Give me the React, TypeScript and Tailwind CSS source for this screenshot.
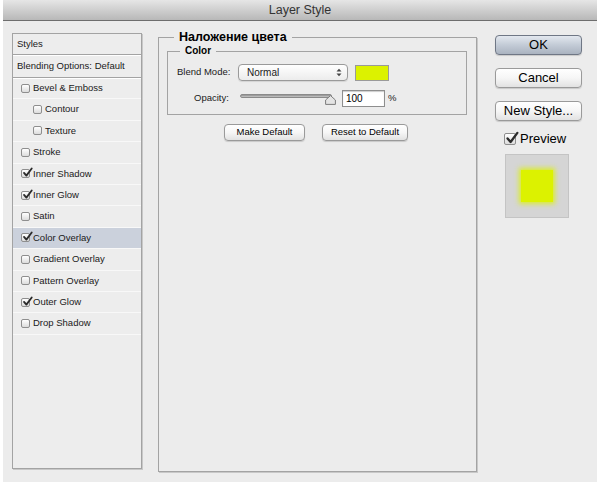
import React from 'react';

const font = { fontFamily: '"Liberation Sans", Arial, sans-serif' };

type Item = { label: string; checked?: boolean; indent?: boolean; active?: boolean };

const items: Item[] = [
  { label: 'Bevel & Emboss' },
  { label: 'Contour', indent: true },
  { label: 'Texture', indent: true },
  { label: 'Stroke' },
  { label: 'Inner Shadow', checked: true },
  { label: 'Inner Glow', checked: true },
  { label: 'Satin' },
  { label: 'Color Overlay', checked: true, active: true },
  { label: 'Gradient Overlay' },
  { label: 'Pattern Overlay' },
  { label: 'Outer Glow', checked: true },
  { label: 'Drop Shadow' },
];

function Check({ checked, size = 9 }: { checked?: boolean; size?: number }) {
  return (
    <span
      className="relative inline-block shrink-0 rounded-[2px] border border-[#8e8e8e] bg-gradient-to-b from-white to-[#dcdcdc]"
      style={{ width: size, height: size }}
    >
      {checked && (
        <svg
          viewBox="0 0 12 12"
          className="absolute"
          style={{ width: size + 2, height: size + 2, left: 0, top: -3 }}
        >
          <path d="M2.2 6.4 L4.8 9.4 L10.6 1.6" fill="none" stroke="#2b2b2b" strokeWidth="2" strokeLinecap="round" strokeLinejoin="round" />
        </svg>
      )}
    </span>
  );
}

function MacButton({ children, primary, className = '' }: { children: React.ReactNode; primary?: boolean; className?: string }) {
  return (
    <div
      className={`flex items-center justify-center rounded-[4px] border text-black shadow-[0_1px_1px_rgba(0,0,0,0.15)] ${
        primary
          ? 'border-[#6f7785] bg-gradient-to-b from-[#e3e8ef] via-[#c3cbd6] to-[#aab3c0]'
          : 'border-[#9a9a9a] bg-gradient-to-b from-white via-[#f6f6f6] to-[#e2e2e2]'
      } ${className}`}
    >
      {children}
    </div>
  );
}

export default function App() {
  return (
    <div className="w-[600px] h-[482px] bg-white overflow-hidden" style={font}>
      <div className="mx-[3px] h-full flex flex-col bg-[#ececec]">
        {/* title bar */}
        <div className="h-[21px] shrink-0 flex items-center justify-center bg-gradient-to-b from-[#e6e6e6] to-[#b8b8b8] border-b border-[#6e6e6e] text-[12.5px] text-[#333]">
          Layer Style
        </div>

        <div className="flex flex-1 pt-[12px]">
          {/* styles list */}
          <div className="ml-[9px] w-[130px] h-[436px] border border-[#a3a3a3] shadow-[1px_1px_0_#c8c8c8] bg-[#ededed] text-[9.5px] text-[#1a1a1a]">
            <div className="h-[21px] flex items-center pl-[4px] border-b border-[#a3a3a3] shadow-[0_1px_0_#fff]">Styles</div>
            <div className="h-[23px] flex items-center pl-[4px] border-b border-[#a3a3a3] shadow-[0_1px_0_#fff]">
              Blending Options: Default
            </div>
            {items.map((it) => (
              <div
                key={it.label}
                className={`h-[21.4px] flex items-center gap-[3px] border-b border-[#f8f8f8] ${
                  it.indent ? 'pl-[20px]' : 'pl-[8px]'
                } ${it.active ? 'bg-[#cbd1dc]' : ''}`}
              >
                <Check checked={it.checked} />
                <span>{it.label}</span>
              </div>
            ))}
          </div>

          {/* main panel */}
          <fieldset className="ml-[16px] -mt-[5px] w-[319px] h-[444px] border border-[#a3a3a3] shadow-[1px_1px_0_#c8c8c8]">
            <legend className="ml-[15px] px-[5px] text-[12.5px] font-bold text-black leading-[18px]">Наложение цвета</legend>
            <fieldset className="ml-[8px] mr-[9px] mt-[-1px] h-[70px] border border-[#a3a3a3]">
              <legend className="ml-[12px] px-[5px] text-[10px] font-bold text-black leading-[12px]">Color</legend>
              <div className="flex items-center mt-[7px] text-[9.5px] text-[#1a1a1a]">
                <span className="ml-[9px] w-[61px]">Blend Mode:</span>
                <div className="w-[110px] h-[17px] rounded-[4px] border border-[#9a9a9a] bg-gradient-to-b from-white to-[#ececec] flex items-center pl-[8px] pr-[5px] justify-between shadow-[0_1px_1px_rgba(0,0,0,0.1)]">
                  <span className="text-[10px]">Normal</span>
                  <svg width="6" height="9" viewBox="0 0 6 9">
                    <path d="M0.5 3.5 L3 0.8 L5.5 3.5 Z M0.5 5.5 L3 8.2 L5.5 5.5 Z" fill="#444" />
                  </svg>
                </div>
                <div className="ml-[7px] w-[34px] h-[16px] bg-[#dcf200] border border-[#9a9a9a]" />
              </div>
              <div className="flex items-center mt-[9px] text-[9.5px] text-[#1a1a1a]">
                <span className="ml-[26px] w-[46px]">Opacity:</span>
                <div className="relative w-[96px] h-[12px]">
                  <div className="absolute left-0 right-[4px] top-[1px] h-[4px] rounded-full bg-gradient-to-b from-[#8f8f8f] to-[#c9c9c9] border border-[#8a8a8a]" />
                  <svg className="absolute right-0 top-[2px]" width="11" height="10" viewBox="0 0 11 10">
                    <path d="M5.5 0.6 L10.4 5 L10.4 9.4 L0.6 9.4 L0.6 5 Z" fill="#e4e4e4" stroke="#7c7c7c" strokeWidth="1" />
                  </svg>
                </div>
                <div className="ml-[6px] w-[43px] h-[17px] bg-white border border-[#8e8e8e] shadow-[inset_0_1px_1px_rgba(0,0,0,0.2)] flex items-center pl-[3px] text-[10px] text-black">
                  100
                </div>
                <span className="ml-[3px]">%</span>
              </div>
            </fieldset>
            <div className="flex mt-[9px] text-[9.5px] text-black">
              <MacButton className="ml-[65px] w-[81px] h-[17px]">Make Default</MacButton>
              <MacButton className="ml-[17px] w-[86px] h-[17px]">Reset to Default</MacButton>
            </div>
          </fieldset>

          {/* right column */}
          <div className="ml-[18px] w-[87px] flex flex-col">
            <MacButton primary className="mt-[2px] h-[20px] text-[13px]">OK</MacButton>
            <MacButton className="mt-[13px] h-[20px] text-[13px]">Cancel</MacButton>
            <MacButton className="mt-[13px] h-[20px] text-[13px]">New Style...</MacButton>
            <div className="mt-[8px] ml-[9px] flex items-center gap-[4px] text-[13px] text-black">
              <Check checked size={12} />
              <span>Preview</span>
            </div>
            <div className="mt-[5px] ml-[10px] w-[64px] h-[64px] bg-[#d5d5d5] border border-[#c4c4c4] flex items-center justify-center">
              <div className="w-[32px] h-[32px] bg-[#dcf200] shadow-[0_0_5px_2px_rgba(220,242,0,0.8)]" />
            </div>
          </div>
        </div>
      </div>
    </div>
  );
}
